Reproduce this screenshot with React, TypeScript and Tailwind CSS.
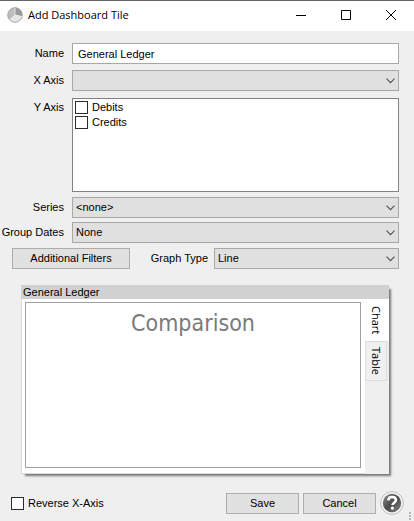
import { useState } from "react";
import type { ReactNode } from "react";

interface SelectFieldProps {
  id: string;
  options: string[];
  value: string;
  onChange: (value: string) => void;
}

function SelectField({ id, options, value, onChange }: SelectFieldProps) {
  return (
    <div className="relative min-w-0 flex-1">
      <select
        id={id}
        value={value}
        onChange={(e) => onChange(e.target.value)}
        className="block h-[21px] w-full appearance-none rounded-none border border-[#a8a8a8] bg-[#e0e0e0] pl-[3px] pr-5 text-black outline-none"
      >
        {options.map((option) => (
          <option key={option} value={option}>
            {option}
          </option>
        ))}
      </select>
      <svg
        viewBox="0 0 9 6"
        className="pointer-events-none absolute right-1 top-2 h-1.5 w-[9px]"
        fill="none"
        stroke="#505050"
        strokeWidth="1.1"
      >
        <path d="M0.5 0.7 4.5 4.7 8.5 0.7" />
      </svg>
    </div>
  );
}

interface FieldRowProps {
  label: string;
  htmlFor: string;
  children: ReactNode;
}

function FieldRow({ label, htmlFor, children }: FieldRowProps) {
  return (
    <div className="flex">
      <label htmlFor={htmlFor} className="w-[72px] shrink-0 whitespace-nowrap pr-2 text-right leading-[21px]">
        {label}
      </label>
      {children}
    </div>
  );
}

function Checkbox({ label }: { label: string }) {
  return (
    <label className="flex items-center gap-1">
      <input
        type="checkbox"
        className="size-[13px] shrink-0 appearance-none rounded-none border border-[#2b2b2b] bg-white checked:bg-[#555]"
      />
      {label}
    </label>
  );
}

function PieIcon() {
  return (
    <svg viewBox="0 0 16 16" className="size-4 shrink-0">
      <circle cx="8" cy="8" r="7.4" fill="#bdbdbd" />
      <path d="M8 8V0.6A7.4 7.4 0 0 1 15.2 9.5Z" fill="#999" />
      <path d="M8 8 15.2 9.5A7.4 7.4 0 0 1 2.5 13Z" fill="#e6e6e6" />
      <circle cx="8" cy="8" r="7.3" fill="none" stroke="#a0a0a0" strokeWidth="0.8" />
      <path d="M8 1v7l7 1.5M8 8l-5.2 4.8" fill="none" stroke="#f4f4f4" strokeWidth="0.8" />
    </svg>
  );
}

function HelpIcon() {
  return (
    <svg viewBox="0 0 24 24" className="size-6">
      <defs>
        <linearGradient id="help-ball" x1="0" y1="0" x2="1" y2="1">
          <stop offset="0" stopColor="#909090" />
          <stop offset="0.5" stopColor="#4a4a4a" />
          <stop offset="1" stopColor="#858585" />
        </linearGradient>
      </defs>
      <circle cx="12" cy="12" r="11.4" fill="#f5f5f5" stroke="#b0b0b0" strokeWidth="0.8" />
      <circle cx="12" cy="12" r="9.2" fill="url(#help-ball)" />
      <path
        d="M8.3 9.3C8.5 7 10 6 12.1 6c2.3 0 3.8 1.2 3.8 3 0 2.6-3.4 2.7-3.4 5"
        fill="none"
        stroke="#fff"
        strokeWidth="2.6"
      />
      <circle cx="12.4" cy="17.1" r="1.6" fill="#fff" />
    </svg>
  );
}

const buttonClass = "h-[21px] border border-[#adadad] bg-[#e1e1e1] text-center leading-[19px]";

export default function App() {
  const [name, setName] = useState("General Ledger");
  const [xAxis, setXAxis] = useState("");
  const [series, setSeries] = useState("<none>");
  const [groupDates, setGroupDates] = useState("None");
  const [graphType, setGraphType] = useState("Line");
  const [tab, setTab] = useState("Chart");

  return (
    <div className="relative flex min-h-screen flex-col bg-[#efefef] font-['Liberation_Sans',sans-serif] text-[11px] text-black">
      {/* Title bar */}
      <header className="flex h-[31px] items-center border-t border-[#666] bg-white pb-0.5 pl-[7px]">
        <PieIcon />
        <h1 className="ml-[5px] flex-1 font-['Open_Sans',sans-serif] text-[11px]">Add Dashboard Tile</h1>
        <button type="button" aria-label="Minimize" className="flex h-full w-[45px] items-center justify-center">
          <svg viewBox="0 0 10 10" className="size-2.5" stroke="#000">
            <path d="M0 5.5h10" />
          </svg>
        </button>
        <button type="button" aria-label="Maximize" className="flex h-full w-[45px] items-center justify-center">
          <svg viewBox="0 0 10 10" className="size-2.5" fill="none" stroke="#000">
            <path d="M0.5 0.5h9v9h-9z" />
          </svg>
        </button>
        <button type="button" aria-label="Close" className="flex h-full w-[46px] items-center justify-center">
          <svg viewBox="0 0 10 10" className="size-2.5" stroke="#000">
            <path d="M0 0 10 10M10 0 0 10" />
          </svg>
        </button>
      </header>

      {/* Fields */}
      <form className="flex flex-col pr-[15px] pt-3" onSubmit={(e) => e.preventDefault()}>
        <FieldRow label="Name" htmlFor="name">
          <input
            id="name"
            type="text"
            value={name}
            onChange={(e) => setName(e.target.value)}
            className="h-[21px] min-w-0 flex-1 border border-[#a8a8a8] bg-white px-[5px] outline-none"
          />
        </FieldRow>
        <div className="mt-1.5">
          <FieldRow label="X Axis" htmlFor="x-axis">
            <SelectField id="x-axis" options={["", "Date", "Account"]} value={xAxis} onChange={setXAxis} />
          </FieldRow>
        </div>
        <fieldset className="mt-[7px] flex" aria-labelledby="y-axis-label">
          <span id="y-axis-label" className="w-[72px] shrink-0 pr-2 text-right leading-[19px]">
            Y Axis
          </span>
          <div className="h-[94px] min-w-0 flex-1 overflow-y-auto border border-[#828282] bg-white px-[2px] pt-px leading-[15px]">
            <Checkbox label="Debits" />
            <Checkbox label="Credits" />
          </div>
        </fieldset>
        <div className="mt-[5px] flex flex-col gap-1">
          <FieldRow label="Series" htmlFor="series">
            <SelectField id="series" options={["<none>", "Account"]} value={series} onChange={setSeries} />
          </FieldRow>
          <FieldRow label="Group Dates" htmlFor="group-dates">
            <SelectField
              id="group-dates"
              options={["None", "Month", "Year"]}
              value={groupDates}
              onChange={setGroupDates}
            />
          </FieldRow>
        </div>
        <div className="mt-[5px] flex pl-3">
          <button type="button" className={`${buttonClass} w-[118px]`}>
            Additional Filters
          </button>
          <label htmlFor="graph-type" className="w-[84px] shrink-0 pr-1.5 text-right leading-[21px]">
            Graph Type
          </label>
          <SelectField id="graph-type" options={["Line", "Bar", "Pie"]} value={graphType} onChange={setGraphType} />
        </div>
      </form>

      {/* Preview */}
      <section className="ml-[21px] mr-[25px] mt-4 flex flex-1 flex-col shadow-[3px_3px_2px_-1px_#777]">
        <h2 className="h-3.5 bg-[#d1d1d1] pl-0.5 leading-[14px]">General Ledger</h2>
        <div className="flex flex-1 border-l border-[#dcdcdc] bg-white">
          <div className="flex flex-1 border-b border-[#dcdcdc] pb-[5px] pl-[3px] pr-1 pt-[3px]">
            <div className="flex-1 border border-[#a0a0a0] bg-white pt-1 text-center font-['DejaVu_Sans_Condensed','DejaVu_Sans',sans-serif] text-[23px] leading-8 text-[#7a7a7a]">
              {tab === "Chart" && "Comparison"}
            </div>
          </div>
          <div
            role="tablist"
            aria-label="Preview"
            className="flex w-6 flex-col bg-[#efefef] font-['Open_Sans',sans-serif] text-[11px]"
          >
            {["Chart", "Table"].map((item) => (
              <button
                key={item}
                type="button"
                role="tab"
                aria-selected={tab === item}
                onClick={() => setTab(item)}
                className={
                  tab === item
                    ? "h-[42px] bg-white leading-[26px] [writing-mode:vertical-rl]"
                    : "mr-0.5 h-10 border border-[#dcdcdc] bg-[#f0f0f0] leading-5 [writing-mode:vertical-rl]"
                }
              >
                {item}
              </button>
            ))}
          </div>
        </div>
      </section>

      {/* Actions */}
      <footer className="mt-[17px] flex items-center pb-1.5 pl-[11px] pr-2.5">
        <Checkbox label="Reverse X-Axis" />
        <div className="ml-auto flex items-center gap-1">
          <button type="button" className={`${buttonClass} w-[73px]`}>
            Save
          </button>
          <button type="button" className={`${buttonClass} w-[73px]`}>
            Cancel
          </button>
          <button type="button" aria-label="Help">
            <HelpIcon />
          </button>
        </div>
      </footer>
      <svg viewBox="0 0 8 10" className="absolute bottom-0 right-0 h-2.5 w-2" fill="#b8b8b8">
        <path d="M3 1h2v2H3zM3 4h2v2H3zM3 7h2v2H3z" />
      </svg>
    </div>
  );
}
